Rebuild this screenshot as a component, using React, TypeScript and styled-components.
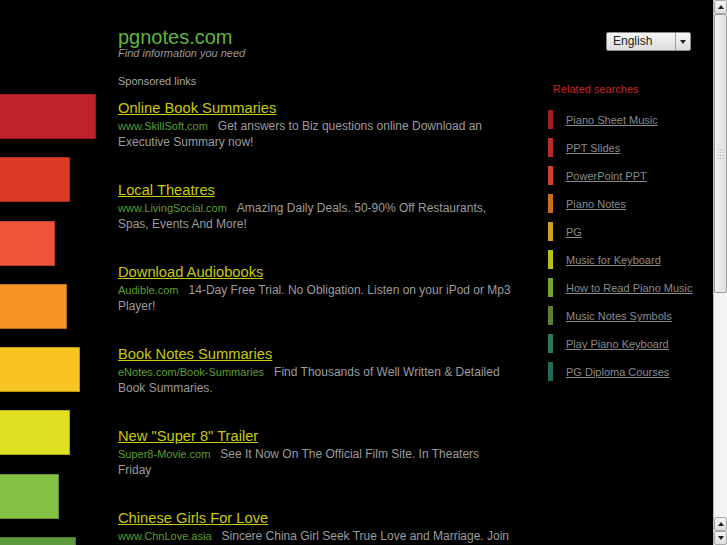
import React from 'react';
import styled, { createGlobalStyle } from 'styled-components';

const GlobalStyle = createGlobalStyle`
  html, body {
    margin: 0;
    padding: 0;
    background: #000;
    height: 100%;
    overflow: hidden;
  }
  #root {
    height: 100%;
  }
`;

const Page = styled.div`
  display: flex;
  height: 545px;
  background: #000;
  font-family: 'Liberation Sans', Arial, sans-serif;
  overflow: hidden;
`;

const Main = styled.div`
  flex: 1;
  min-width: 0;
  display: flex;
  overflow: hidden;
`;

const BarColumn = styled.div`
  width: 118px;
  flex-shrink: 0;
  padding-top: 94px;
  display: flex;
  flex-direction: column;
  align-items: flex-start;
  gap: 18.3px;
`;

const Bar = styled.div<{ $w: number; $c: string }>`
  width: ${(p) => p.$w}px;
  height: 45px;
  flex-shrink: 0;
  background: ${(p) => p.$c};
  box-shadow: inset -1px -1px 0 rgba(0, 0, 0, 0.25), inset 0 1px 0 rgba(0, 0, 0, 0.2);
`;

const Content = styled.div`
  width: 394px;
  flex-shrink: 0;
  padding-top: 27px;
  margin-right: 36px;
`;

const SiteTitle = styled.div`
  color: #5fb53c;
  font-size: 20px;
  line-height: 21px;
`;

const Tagline = styled.div`
  color: #9a9a9a;
  font-size: 11px;
  font-style: italic;
  line-height: 12px;
  margin-top: -1px;
`;

const Sponsored = styled.div`
  color: #a6a6a6;
  font-size: 11px;
  line-height: 13px;
  margin-top: 16px;
`;

const AdList = styled.div`
  margin-top: 9.5px;
  display: flex;
  flex-direction: column;
  gap: 30px;
`;

const Ad = styled.div`
  display: flex;
  flex-direction: column;
`;

const AdTitle = styled.a`
  color: #c9c90c;
  font-size: 14.7px;
  line-height: 20px;
  text-decoration: underline;
  align-self: flex-start;
`;

const AdText = styled.div`
  color: #9c9c9c;
  font-size: 12px;
  line-height: 16px;
`;

const AdUrl = styled.span`
  color: #5c9e2e;
  font-size: 11px;
  margin-right: 10px;
`;

const Side = styled.div`
  flex: 1;
  min-width: 0;
  display: flex;
  flex-direction: column;
  padding-right: 22px;
`;

const SelectBox = styled.div`
  align-self: flex-end;
  margin-top: 32px;
  width: 85px;
  height: 19px;
  box-sizing: border-box;
  display: flex;
  border: 1px solid #8c8c8c;
  border-radius: 2px;
  background: linear-gradient(#f6f6f6, #dcdcdc);
  color: #222;
  font-size: 12px;
`;

const SelectLabel = styled.div`
  flex: 1;
  padding-left: 6px;
  line-height: 17px;
`;

const SelectArrow = styled.div`
  width: 14px;
  border-left: 1px solid #9a9a9a;
  display: flex;
  align-items: center;
  justify-content: center;

  &::after {
    content: '';
    border-left: 3.5px solid transparent;
    border-right: 3.5px solid transparent;
    border-top: 4px solid #222;
  }
`;

const RelatedHead = styled.div`
  color: #c4262a;
  font-size: 11px;
  line-height: 13px;
  margin-top: 32px;
  margin-left: 5px;
`;

const RelatedList = styled.div`
  margin-top: 14px;
  display: flex;
  flex-direction: column;
  gap: 9px;
`;

const RelatedItem = styled.div`
  display: flex;
  align-items: center;
  gap: 13px;
  height: 19px;
`;

const RelatedBar = styled.div<{ $c: string }>`
  width: 5px;
  height: 19px;
  flex-shrink: 0;
  background: ${(p) => p.$c};
`;

const RelatedLink = styled.a`
  color: #8a8a8a;
  font-size: 11px;
  text-decoration: underline;
  white-space: nowrap;
  padding-top: 1px;
`;

const Scrollbar = styled.div`
  width: 14px;
  flex-shrink: 0;
  display: flex;
  flex-direction: column;
  background: #f5f5f5;
  border-left: 1px solid #b8b8b8;
  box-sizing: border-box;
`;

const ScrollButton = styled.div<{ $down?: boolean }>`
  height: 14px;
  flex-shrink: 0;
  box-sizing: border-box;
  border: 1px solid #a8a8a8;
  border-radius: 2px;
  background: linear-gradient(#f4f4f4, #dedede);
  display: flex;
  align-items: center;
  justify-content: center;

  &::after {
    content: '';
    border-left: 3.5px solid transparent;
    border-right: 3.5px solid transparent;
    ${(p) => (p.$down ? 'border-top: 4px solid #222;' : 'border-bottom: 4px solid #222;')}
  }
`;

const Thumb = styled.div`
  height: 279px;
  flex-shrink: 0;
  box-sizing: border-box;
  border: 1px solid #9c9c9c;
  border-radius: 2px;
  background: linear-gradient(90deg, #f2f2f4, #e0e0e4);
  display: flex;
  align-items: center;
  justify-content: center;
`;

const Grip = styled.div`
  width: 7px;
  height: 12px;
  background-image: radial-gradient(circle, #a8a8a8 0.6px, transparent 0.8px);
  background-size: 2.4px 3px;
`;

const Track = styled.div`
  flex: 1;
`;

const leftBars = [
  { w: 96, c: '#c0222a' },
  { w: 70, c: '#dc3b26' },
  { w: 55, c: '#f0523a' },
  { w: 67, c: '#f39321' },
  { w: 80, c: '#f8c41f' },
  { w: 70, c: '#e0e020' },
  { w: 59, c: '#85c143' },
  { w: 76, c: '#5f9b3e' },
];

const ads = [
  {
    title: 'Online Book Summaries',
    url: 'www.SkillSoft.com',
    text: 'Get answers to Biz questions online Download an Executive Summary now!',
  },
  {
    title: 'Local Theatres',
    url: 'www.LivingSocial.com',
    text: 'Amazing Daily Deals. 50-90% Off Restaurants, Spas, Events And More!',
  },
  {
    title: 'Download Audiobooks',
    url: 'Audible.com',
    text: '14-Day Free Trial. No Obligation. Listen on your iPod or Mp3 Player!',
  },
  {
    title: 'Book Notes Summaries',
    url: 'eNotes.com/Book-Summaries',
    text: 'Find Thousands of Well Written & Detailed Book Summaries.',
  },
  {
    title: 'New "Super 8" Trailer',
    url: 'Super8-Movie.com',
    text: 'See It Now On The Official Film Site. In Theaters Friday',
  },
  {
    title: 'Chinese Girls For Love',
    url: 'www.ChnLove.asia',
    text: 'Sincere China Girl Seek True Love and Marriage. Join Free Now!',
  },
];

const related = [
  { label: 'Piano Sheet Music', c: '#a01e22' },
  { label: 'PPT Slides', c: '#b82e28' },
  { label: 'PowerPoint PPT', c: '#cc432e' },
  { label: 'Piano Notes', c: '#c8701a' },
  { label: 'PG', c: '#d4a020' },
  { label: 'Music for Keyboard', c: '#bcbc1c' },
  { label: 'How to Read Piano Music', c: '#76a632' },
  { label: 'Music Notes Symbols', c: '#5a8232' },
  { label: 'Play Piano Keyboard', c: '#2a7a5c' },
  { label: 'PG Diploma Courses', c: '#246a5a' },
];

const App = () => {
  return (
    <>
      <GlobalStyle />
      <Page>
        <Main>
          <BarColumn>
            {leftBars.map((b, i) => (
              <Bar key={i} $w={b.w} $c={b.c} />
            ))}
          </BarColumn>
          <Content>
            <SiteTitle>pgnotes.com</SiteTitle>
            <Tagline>Find information you need</Tagline>
            <Sponsored>Sponsored links</Sponsored>
            <AdList>
              {ads.map((ad) => (
                <Ad key={ad.title}>
                  <AdTitle href="#">{ad.title}</AdTitle>
                  <AdText>
                    <AdUrl>{ad.url}</AdUrl>
                    {ad.text}
                  </AdText>
                </Ad>
              ))}
            </AdList>
          </Content>
          <Side>
            <SelectBox>
              <SelectLabel>English</SelectLabel>
              <SelectArrow />
            </SelectBox>
            <RelatedHead>Related searches</RelatedHead>
            <RelatedList>
              {related.map((r) => (
                <RelatedItem key={r.label}>
                  <RelatedBar $c={r.c} />
                  <RelatedLink href="#">{r.label}</RelatedLink>
                </RelatedItem>
              ))}
            </RelatedList>
          </Side>
        </Main>
        <Scrollbar>
          <ScrollButton />
          <Thumb>
            <Grip />
          </Thumb>
          <Track />
          <ScrollButton />
          <ScrollButton $down />
        </Scrollbar>
      </Page>
    </>
  );
};

export default App;
